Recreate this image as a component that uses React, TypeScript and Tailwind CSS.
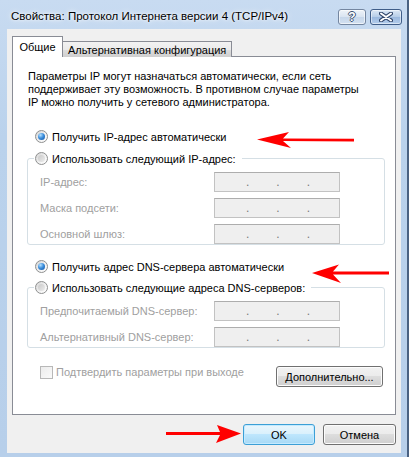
import React from "react";

function Radio({ checked }: { checked?: boolean }) {
  return (
    <span className="flex h-[13px] w-[13px] shrink-0 items-center justify-center rounded-full border border-[#8e8f8f] bg-[linear-gradient(135deg,#d4d4d4,#f4f4f4_60%,#ffffff)]">
      {checked ? (
        <span className="h-[7px] w-[7px] rounded-full bg-[radial-gradient(circle_at_35%_30%,#b8e2ff_0%,#3d8fdc_45%,#0f4f9e_100%)]" />
      ) : (
        <span className="h-[7px] w-[7px] rounded-full bg-[linear-gradient(135deg,#c9c9c9,#ececec)]" />
      )}
    </span>
  );
}

function IpBox() {
  return (
    <div className="flex h-[20px] w-[126px] items-center border border-[#c2c2c2] border-t-[#adadad] bg-[#efefef] text-[12px] leading-[12px] text-[#7a7a7a]">
      <span className="ml-[31px]">.</span>
      <span className="ml-[27px]">.</span>
      <span className="ml-[27px]">.</span>
    </div>
  );
}

function FieldRow({ label }: { label: string }) {
  return (
    <div className="flex items-center pl-[12px]">
      <span className="w-[174px] whitespace-nowrap text-[11px] leading-[14px] text-[#a0a0a0]">{label}</span>
      <IpBox />
    </div>
  );
}

function GroupBox({ legend, rows }: { legend: string; rows: string[] }) {
  return (
    <div className="w-[358px] rounded-[3px] border border-[#d5dfe5]">
      <div className="-mt-[7px] ml-[6px] flex h-[13px] w-fit items-center gap-[4px] bg-white pl-[1px] pr-[6px]">
        <Radio />
        <span className="whitespace-nowrap text-[11px] leading-[14px] text-black">{legend}</span>
      </div>
      <div className="mt-[7px] flex flex-col gap-[6px]">
        {rows.map((r) => (
          <FieldRow key={r} label={r} />
        ))}
      </div>
    </div>
  );
}

export default function App() {
  return (
    <div className="relative flex h-[457px] w-[413px] overflow-hidden bg-white font-['Liberation_Sans','Arial',sans-serif]">
      <div className="flex h-full w-[409px] flex-col border-r-2 border-[#4a6282] bg-[linear-gradient(#c8dbf1,#bad2ec_30%,#b7cfea)]">
        {/* Title bar */}
        <div className="flex h-[29px] shrink-0 items-start">
          <span className="ml-[11px] mt-[9px] whitespace-nowrap text-[11.5px] leading-[15px] text-black [text-shadow:0_0_6px_#ffffff,0_0_3px_#ffffff]">
            Свойства: Протокол Интернета версии 4 (TCP/IPv4)
          </span>
          <div className="ml-auto mr-[5px] mt-[9px] flex gap-[4px]">
            <div className="flex h-[16px] w-[28px] items-center justify-center rounded-[3px] border border-[#7486a0] bg-[linear-gradient(#eef3f9,#d9e4f1_50%,#c6d6ea_51%,#d3e1f1)] shadow-[inset_0_0_0_1px_rgba(255,255,255,0.6)]">
              <span className="text-[12px] font-bold leading-[12px] text-white [text-shadow:1px_0_0_#3d5272,-1px_0_0_#3d5272,0_1px_0_#3d5272,0_-1px_0_#3d5272]">
                ?
              </span>
            </div>
            <div className="flex h-[16px] w-[32px] items-center justify-center rounded-[3px] border border-[#3f5d88] bg-[linear-gradient(#dce8f5,#b6cde8_50%,#9ab8de_51%,#b3cdec)] shadow-[inset_0_0_0_1px_rgba(255,255,255,0.5)]">
              <svg width="14" height="10" viewBox="0 0 14 10">
                <path d="M2 1.5 L12 8.5 M12 1.5 L2 8.5" stroke="#2e4368" strokeWidth="4" strokeLinecap="round" />
                <path d="M2 1.5 L12 8.5 M12 1.5 L2 8.5" stroke="#ffffff" strokeWidth="2" strokeLinecap="round" />
              </svg>
            </div>
          </div>
        </div>

        {/* Client area */}
        <div className="ml-[7px] flex h-[424px] w-[394px] shrink-0 flex-col bg-[#f0f0f0]">
          {/* Tabs */}
          <div className="relative z-10 -mb-px ml-[5px] mt-[7px] flex items-end">
            <div className="flex h-[21px] w-[51px] items-center justify-center border border-b-0 border-[#898c95] bg-white text-[11px] leading-[14px] text-black">
              Общие
            </div>
            <div className="-ml-px flex h-[16px] w-[170px] items-center whitespace-nowrap border border-b-0 border-[#898c95] bg-[linear-gradient(#f2f2f2,#ebebeb_50%,#dddddd_51%,#cfcfcf)] pl-[5px] text-[11px] leading-[14px] text-black">
              Альтернативная конфигурация
            </div>
          </div>

          {/* Panel */}
          <div className="ml-[5px] flex h-[359px] w-[384px] flex-col border border-[#898c95] bg-white">
            <p className="ml-[15px] mt-[13px] whitespace-nowrap text-[11px] leading-[13px] text-black">
              Параметры IP могут назначаться автоматически, если сеть
              <br />
              поддерживает эту возможность. В противном случае параметры
              <br />
              IP можно получить у сетевого администратора.
            </p>

            <div className="ml-[22px] mt-[21px] flex h-[13px] items-center gap-[4px]">
              <Radio checked />
              <span className="whitespace-nowrap text-[11px] leading-[14px] text-black">Получить IP-адрес автоматически</span>
            </div>

            <div className="ml-[14px] mt-[15px]">
              <GroupBox
                legend="Использовать следующий IP-адрес:"
                rows={["IP-адрес:", "Маска подсети:", "Основной шлюз:"]}
              />
            </div>

            <div className="ml-[22px] mt-[15px] flex h-[13px] items-center gap-[4px]">
              <Radio checked />
              <span className="whitespace-nowrap text-[11px] leading-[14px] text-black">Получить адрес DNS-сервера автоматически</span>
            </div>

            <div className="ml-[14px] mt-[14px]">
              <GroupBox
                legend="Использовать следующие адреса DNS-серверов:"
                rows={["Предпочитаемый DNS-сервер:", "Альтернативный DNS-сервер:"]}
              />
            </div>

            <div className="mt-[17px] flex items-start">
              <div className="ml-[27px] flex items-center gap-[3px]">
                <span className="h-[13px] w-[13px] border border-[#b8b8b8] bg-[linear-gradient(135deg,#ececec,#fafafa)]" />
                <span className="whitespace-nowrap text-[11px] leading-[14px] text-[#a0a0a0]">Подтвердить параметры при выходе</span>
              </div>
              <button className="ml-auto mr-[12px] mt-[1px] h-[21px] w-[107px] whitespace-nowrap rounded-[3px] border border-[#707070] bg-[linear-gradient(#f2f2f2,#ebebeb_49%,#dddddd_50%,#cfcfcf)] text-[11px] leading-[14px] text-black shadow-[inset_0_0_0_1px_#fcfcfc]">
                Дополнительно...
              </button>
            </div>
          </div>

          {/* Buttons */}
          <div className="mr-[5px] mt-[9px] flex justify-end gap-[8px]">
            <button className="h-[21px] w-[72px] rounded-[3px] border border-[#3c9fd6] bg-[linear-gradient(#eaf6fd,#d9f0fc_49%,#bee6fd_50%,#a7d9f5)] text-[11px] leading-[14px] text-black shadow-[inset_0_0_0_1px_#c4eaff]">
              OK
            </button>
            <button className="h-[21px] w-[73px] rounded-[3px] border border-[#707070] bg-[linear-gradient(#f2f2f2,#ebebeb_49%,#dddddd_50%,#cfcfcf)] text-[11px] leading-[14px] text-black shadow-[inset_0_0_0_1px_#fcfcfc]">
              Отмена
            </button>
          </div>
        </div>
      </div>

      {/* Red annotation arrows */}
      <svg className="absolute left-[256px] top-[131px]" width="100" height="18" viewBox="0 0 100 18">
        <path d="M1 8.5 L33 1 L27 7.5 L98 7.8 L98 10.5 L27 10 L35 17 Z" fill="#ff0000" />
      </svg>
      <svg className="absolute left-[311px] top-[263px]" width="80" height="21" viewBox="0 0 80 21">
        <path d="M1 10 L28 1.5 L22 8.5 L78 8.5 L78 11.5 L22 11.5 L30 20 Z" fill="#ff0000" />
      </svg>
      <svg className="absolute left-[165px] top-[424px]" width="77" height="20" viewBox="0 0 77 20">
        <path d="M76 9.5 L52 1 L55 8 L1 8 L1 11 L55 11 L51 19 Z" fill="#ff0000" />
      </svg>
    </div>
  );
}
